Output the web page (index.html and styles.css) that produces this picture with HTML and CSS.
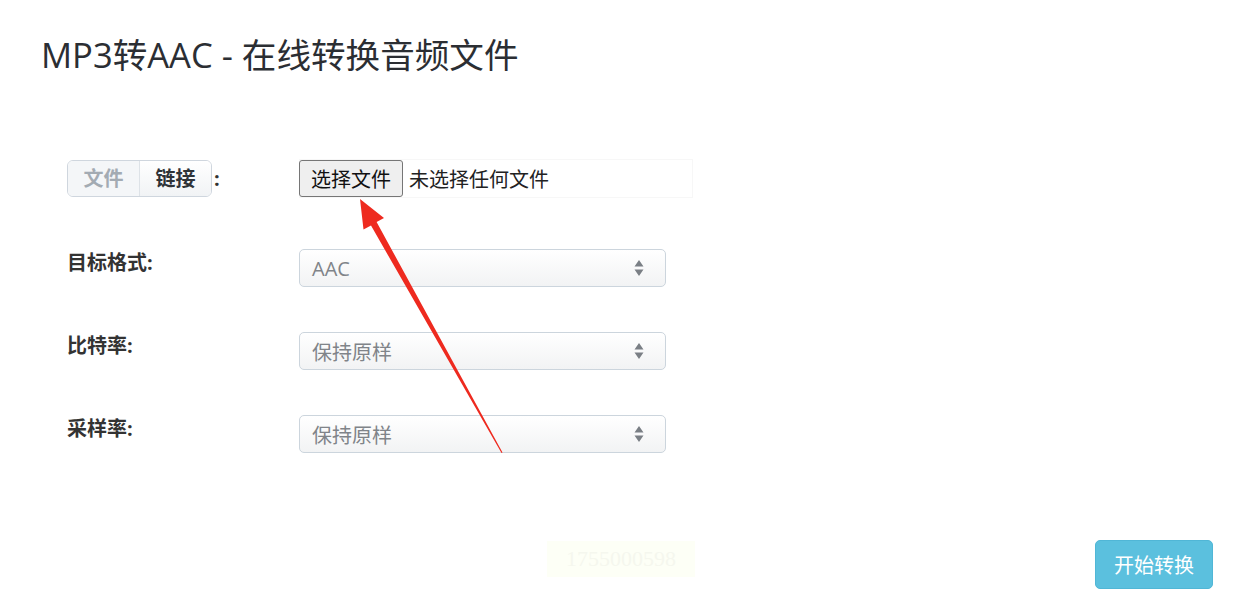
FILE: index.html
```html
<!DOCTYPE html>
<html lang="zh-CN">
<head>
    <meta charset="UTF-8">
    <meta name="viewport" content="width=device-width, initial-scale=1.0">
    <title>MP3转AAC - 在线转换音频文件</title>
    <link rel="stylesheet" href="styles.css">
</head>
<body>
    <!-- Title -->
    <h1 class="title">MP3转AAC - 在线转换音频文件</h1>

    <!-- Form -->
    <div class="form">
        <div class="row row-source">
            <div class="label">
                <div class="toggle">
                    <span class="toggle-item active">文件</span>
                    <span class="toggle-item">链接</span>
                </div>
                <span class="colon">:</span>
            </div>
            <div class="file-input">
                <span class="file-btn">选择文件</span>
                <span class="file-name">未选择任何文件</span>
            </div>
        </div>

        <div class="row">
            <div class="label">目标格式:</div>
            <div class="select">
                <span>AAC</span>
                <svg class="caret" width="10" height="18" viewBox="0 0 10 18"><path d="M5 1 L9.5 7.5 H0.5 Z M5 17 L9.5 10.5 H0.5 Z" fill="#7a7f85"/></svg>
            </div>
        </div>

        <div class="row">
            <div class="label">比特率:</div>
            <div class="select">
                <span>保持原样</span>
                <svg class="caret" width="10" height="18" viewBox="0 0 10 18"><path d="M5 1 L9.5 7.5 H0.5 Z M5 17 L9.5 10.5 H0.5 Z" fill="#7a7f85"/></svg>
            </div>
        </div>

        <div class="row">
            <div class="label">采样率:</div>
            <div class="select">
                <span>保持原样</span>
                <svg class="caret" width="10" height="18" viewBox="0 0 10 18"><path d="M5 1 L9.5 7.5 H0.5 Z M5 17 L9.5 10.5 H0.5 Z" fill="#7a7f85"/></svg>
            </div>
        </div>
    </div>

    <!-- Footer -->
    <div class="footer">
        <div></div>
        <div class="stamp">1755000598</div>
        <button class="start">开始转换</button>
    </div>

    <!-- Red annotation arrow -->
    <svg class="arrow" width="1242" height="603" viewBox="0 0 1242 603">
        <path d="M360 199 L384 218 L376.6 222 L502.5 452.5 L501.5 453 L371 225.6 L363.5 229.5 Z" fill="#ee2a1f"/>
    </svg>
</body>
</html>
```

FILE: styles.css
```css
/* General */
body {
    margin: 0;
    padding: 0;
    font-family: 'Open Sans', 'Noto Sans CJK SC', sans-serif;
    color: #333;
    background: #fff;
    position: relative;
    height: 603px;
    overflow: hidden;
}

.title {
    margin: 0;
    padding: 33px 0 0 41px;
    font-size: 34.6px;
    font-weight: 400;
    line-height: 44px;
    color: #2b2e33;
}

/* Form rows */
.form {
    padding: 83px 0 0 67px;
    display: flex;
    flex-direction: column;
    gap: 45px;
}
.row {
    display: grid;
    grid-template-columns: 232px 367px;
    align-items: start;
}
.row-source {
    margin-bottom: 6px;
}
.label {
    font-size: 20px;
    font-weight: 700;
    line-height: 26px;
    color: #333;
    padding-top: 1px;
}
.row-source .label {
    display: flex;
    align-items: center;
    padding-top: 0;
}

/* File / link toggle */
.toggle {
    display: flex;
    border: 1px solid #cfd6de;
    border-radius: 6px;
    overflow: hidden;
    height: 35px;
}
.toggle-item {
    width: 71px;
    display: flex;
    justify-content: center;
    align-items: center;
    font-size: 20px;
    font-weight: 700;
    color: #2f3338;
    background: linear-gradient(#ffffff, #f1f3f5);
}
.toggle-item.active {
    color: #a3abb3;
    background: #f4f6f8;
    border-right: 1px solid #dde2e7;
}
.colon {
    margin-left: 2px;
    font-size: 20px;
}

/* File input */
.file-input {
    width: 394px;
    height: 39px;
    margin-top: -1px;
    display: flex;
    align-items: center;
    border: 1px solid #f7f7f7;
    box-sizing: border-box;
}
.file-btn {
    height: 37px;
    box-sizing: border-box;
    padding: 0 11px;
    display: flex;
    align-items: center;
    background: #efefef;
    border: 1px solid #767676;
    border-radius: 3px;
    font-size: 20px;
    color: #111;
    margin-left: -1px;
}
.file-name {
    margin-left: 6px;
    font-size: 20px;
    color: #222;
}

/* Selects */
.select {
    height: 38px;
    box-sizing: border-box;
    border: 1px solid #ccd5dd;
    border-radius: 5px;
    background: linear-gradient(#ffffff, #f2f3f4);
    display: flex;
    align-items: center;
    justify-content: space-between;
    padding: 0 21px 0 12px;
    font-size: 20px;
    color: #808489;
}

/* Footer */
.footer {
    display: grid;
    grid-template-columns: 1fr auto 1fr;
    align-items: start;
    padding: 87px 29px 0 29px;
}
.stamp {
    width: 148px;
    height: 36px;
    margin-top: 1px;
    background: #fdfff6;
    color: #f5f7ee;
    font-family: 'Liberation Serif', serif;
    font-size: 22px;
    display: flex;
    align-items: center;
    justify-content: center;
}
.start {
    justify-self: end;
    width: 118px;
    height: 49px;
    border: 1px solid #50b6d6;
    border-radius: 5px;
    background: #5bc0de;
    color: #fff;
    font-family: 'Noto Sans CJK SC', sans-serif;
    font-size: 20px;
    cursor: pointer;
}

/* Annotation arrow over the form */
.arrow {
    position: absolute;
    top: 0;
    left: 0;
    pointer-events: none;
}
```
